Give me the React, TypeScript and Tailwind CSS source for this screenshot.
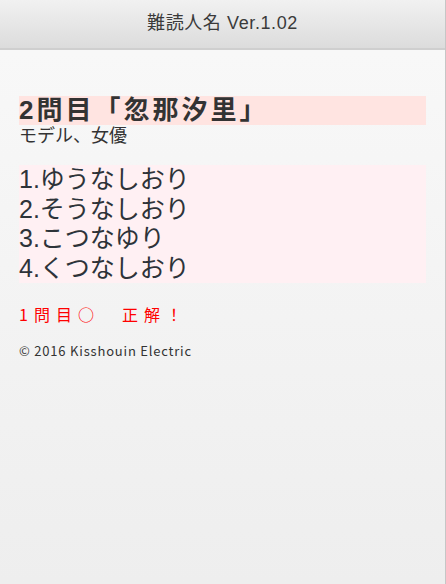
import React from "react";

const jp = { fontFamily: '"Noto Sans CJK JP", "Noto Sans", sans-serif' };
const mixed = { fontFamily: '"Liberation Sans", "Noto Sans CJK JP", sans-serif' };

export default function App() {
  const choices = ["1.ゆうなしおり", "2.そうなしおり", "3.こつなゆり", "4.くつなしおり"];
  return (
    <div
      className="w-[446px] h-[584px] border-r border-[#c6c6c6] bg-gradient-to-b from-[#f9f9f9] to-[#eeeeee] flex flex-col"
      style={jp}
    >
      <div className="h-[50px] shrink-0 border-b-2 border-[#cfcfcf] bg-gradient-to-b from-[#f1f1f1] to-[#dcdcdc] flex items-center justify-center">
        <span className="text-[18px] leading-none text-[#3a3a3a] tracking-[0.6px] pb-[3px]" style={mixed}>
          難読人名 Ver.1.02
        </span>
      </div>
      <div className="pl-[19px] pr-[19px] pt-[46px]">
        <div className="bg-[#ffe4e1] h-[29px] flex items-center">
          <span className="text-[26px] font-bold leading-[29px] text-[#333] tracking-[3px]" style={mixed}>
            2問目「忽那汐里」
          </span>
        </div>
        <div className="text-[18px] leading-[22px] text-[#333]" style={mixed}>
          モデル、女優
        </div>
        <div className="mt-[18px] bg-[#fff0f3]">
          {choices.map((c) => (
            <div key={c} className="h-[29.5px] text-[25px] leading-[29.5px] text-[#2d3339]" style={mixed}>
              {c}
            </div>
          ))}
        </div>
        <div className="mt-[21px] text-[16px] leading-[20px] text-[#ff0000] tracking-[6px]">1問目○　正解！</div>
        <div className="mt-[18px] text-[13px] leading-[18px] text-[#333] tracking-[0.8px]">© 2016 Kisshouin Electric</div>
      </div>
    </div>
  );
}
